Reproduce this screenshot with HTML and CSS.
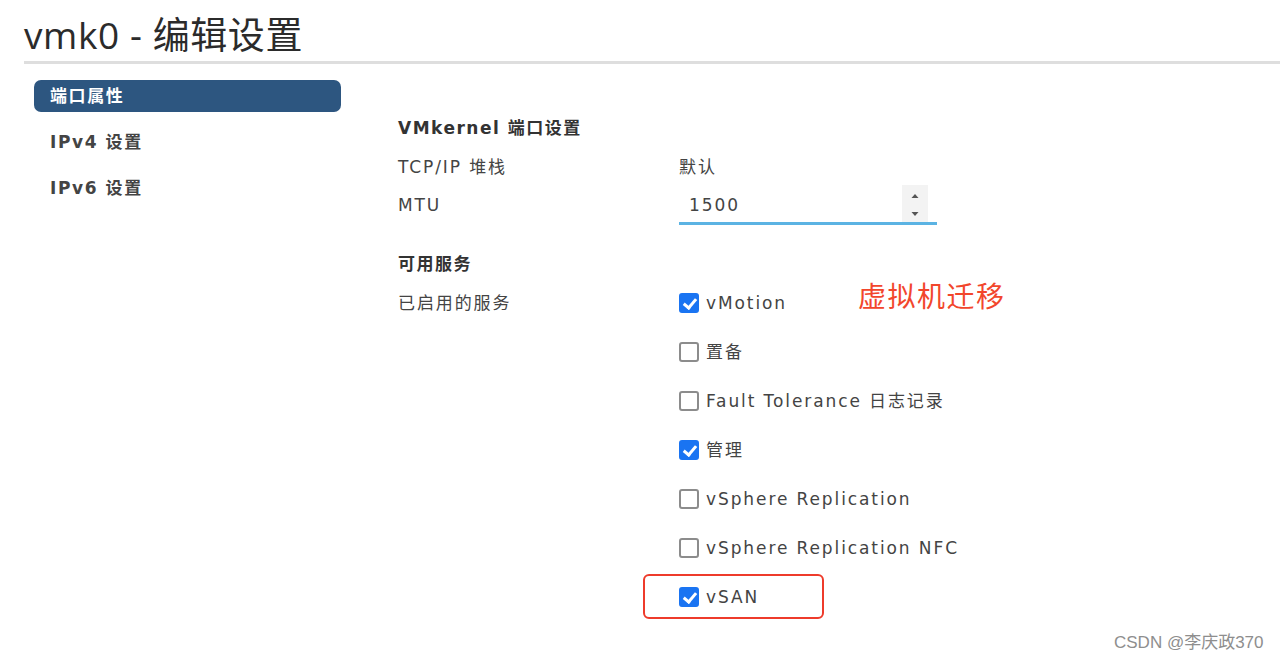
FILE: index.html
```html
<!DOCTYPE html>
<html lang="zh-CN">
<head>
    <meta charset="UTF-8">
    <title>vmk0 - 编辑设置</title>
    <link rel="stylesheet" href="styles.css">
</head>
<body>
    <h1 class="title">vmk0 - 编辑设置</h1>

    <div class="layout">
        <ul class="side-nav">
            <li class="nav-item active">端口属性</li>
            <li class="nav-item">IPv4 设置</li>
            <li class="nav-item">IPv6 设置</li>
        </ul>

        <div class="content">
            <div class="section-title">VMkernel 端口设置</div>
            <div class="row">
                <div class="label">TCP/IP 堆栈</div>
                <div class="value">默认</div>
            </div>
            <div class="row">
                <div class="label">MTU</div>
                <div class="value">
                    <div class="mtu-input">
                        <span class="mtu-text">1500</span>
                        <span class="spinner">
                            <svg width="12" height="36" viewBox="0 0 12 36">
                                <path d="M2.5 12 L6 8 L9.5 12 Z" fill="#555"/>
                                <path d="M2.5 26 L6 30 L9.5 26 Z" fill="#555"/>
                            </svg>
                        </span>
                    </div>
                </div>
            </div>

            <div class="section-title second">可用服务</div>
            <div class="row services">
                <div class="label">已启用的服务</div>
                <div class="value">
                    <div class="service">
                        <span class="check on"></span>vMotion
                        <span class="note">虚拟机迁移</span>
                    </div>
                    <div class="service"><span class="check"></span>置备</div>
                    <div class="service"><span class="check"></span>Fault Tolerance 日志记录</div>
                    <div class="service"><span class="check on"></span>管理</div>
                    <div class="service"><span class="check"></span>vSphere Replication</div>
                    <div class="service"><span class="check"></span>vSphere Replication NFC</div>
                    <div class="service boxed"><span class="check on"></span>vSAN</div>
                </div>
            </div>
        </div>
    </div>

    <div class="watermark">CSDN @李庆政370</div>
</body>
</html>
```

FILE: styles.css
```css
body {
    margin: 0;
    font-family: 'DejaVu Sans', 'Noto Sans CJK SC', sans-serif;
    color: #333;
    background: #fff;
    width: 1280px;
    height: 658px;
    overflow: hidden;
    position: relative;
}
.title {
    margin: 0 0 0 24px;
    padding-top: 12px;
    height: 49px;
    font-family: 'Open Sans', 'Noto Sans CJK SC', sans-serif;
    font-weight: normal;
    font-size: 37px;
    line-height: 46px;
    letter-spacing: 0.6px;
    color: #2b2b2b;
    border-bottom: 3px solid #dedede;
}
.layout {
    display: flex;
    padding-top: 16px;
}
.side-nav {
    list-style: none;
    margin: 0 0 0 34px;
    padding: 0;
    width: 307px;
}
.nav-item {
    height: 32px;
    line-height: 32px;
    padding-left: 16px;
    margin-bottom: 14px;
    font-size: 17px;
    font-weight: bold;
    letter-spacing: 1.6px;
    color: #444;
}
.nav-item.active {
    background-color: #2d5680;
    color: #fff;
    border-radius: 7px;
}
.content {
    margin-left: 57px;
    padding-top: 38px;
    font-size: 17px;
    letter-spacing: 1.9px;
    color: #444;
}
.section-title {
    font-weight: bold;
    height: 20px;
    line-height: 20px;
    margin-bottom: 19px;
    letter-spacing: 1.5px;
    color: #333;
}
.section-title.second {
    margin-top: 21px;
}
.row {
    display: flex;
    min-height: 38px;
}
.label {
    width: 281px;
    line-height: 20px;
}
.value {
    line-height: 20px;
}
.mtu-input {
    position: relative;
    width: 258px;
    height: 40px;
    margin-top: -10px;
    border-bottom: 3px solid #5bb3e3;
    box-sizing: border-box;
}
.mtu-text {
    position: absolute;
    left: 10px;
    top: 10px;
}
.spinner {
    position: absolute;
    right: 9px;
    top: 0;
    width: 26px;
    height: 37px;
    background: #f3f3f3;
    display: flex;
    justify-content: center;
    align-items: center;
}
.service {
    display: flex;
    align-items: center;
    height: 20px;
    margin-bottom: 29px;
    position: relative;
}
.check {
    width: 20px;
    height: 20px;
    border: 2px solid #8c8c8c;
    border-radius: 3px;
    box-sizing: border-box;
    margin-right: 7px;
    position: relative;
}
.check.on {
    background: #1a74f2;
    border-color: #1a74f2;
}
.check.on::after {
    content: "";
    position: absolute;
    left: 5px;
    top: 1px;
    width: 5px;
    height: 10px;
    border: solid #fff;
    border-width: 0 3px 3px 0;
    transform: rotate(40deg);
}
.note {
    position: absolute;
    left: 179px;
    top: -8px;
    color: #f2462c;
    font-family: 'Noto Sans CJK SC', sans-serif;
    font-size: 28px;
    letter-spacing: 1.5px;
    white-space: nowrap;
}
.boxed::before {
    content: "";
    position: absolute;
    left: -36px;
    top: -13px;
    width: 181px;
    height: 45px;
    border: 2px solid #ee3b2b;
    border-radius: 6px;
    box-sizing: border-box;
}
.watermark {
    position: absolute;
    left: 1114px;
    top: 628px;
    font-family: 'Liberation Sans', 'Noto Sans CJK SC', sans-serif;
    font-size: 17px;
    color: #8e8e8e;
}
```
